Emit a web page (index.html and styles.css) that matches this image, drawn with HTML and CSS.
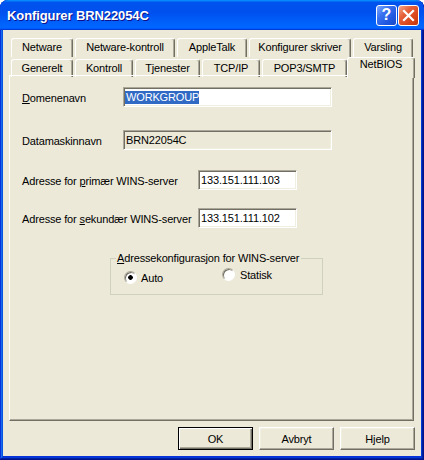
FILE: index.html
```html
<!DOCTYPE html>
<html lang="no">
<head>
<meta charset="utf-8">
<title>Konfigurer BRN22054C</title>
<link rel="stylesheet" href="styles.css">
</head>
<body>
<div class="window">
  <div class="titlebar">
    <span class="title">Konfigurer BRN22054C</span>
    <div class="controls">
      <span class="ctl help">?</span>
      <span class="ctl close">
        <svg width="13" height="13" viewBox="0 0 13 13"><path d="M2 2 L11 11 M11 2 L2 11" stroke="#fff" stroke-width="2.2" stroke-linecap="square" fill="none"/></svg>
      </span>
    </div>
  </div>
  <div class="client">
    <div class="tabs">
      <div class="tabrow back">
        <div class="tab">Netware</div>
        <div class="tab">Netware-kontroll</div>
        <div class="tab">AppleTalk</div>
        <div class="tab">Konfigurer skriver</div>
        <div class="tab">Varsling</div>
      </div>
      <div class="tabrow front">
        <div class="tab">Generelt</div>
        <div class="tab">Kontroll</div>
        <div class="tab">Tjenester</div>
        <div class="tab">TCP/IP</div>
        <div class="tab">POP3/SMTP</div>
        <div class="tab selected">NetBIOS</div>
      </div>
    </div>
    <div class="panel">
      <div class="frow">
        <span class="lbl narrow"><u>D</u>omenenavn</span>
        <span class="edit long rw"><span class="sel">WORKGROUP</span></span>
      </div>
      <div class="frow r2">
        <span class="lbl narrow">Datamaskinnavn</span>
        <span class="edit long ro">BRN22054C</span>
      </div>
      <div class="frow r3">
        <span class="lbl wide">Adresse for <u>p</u>rimær WINS-server</span>
        <span class="edit short rw">133.151.111.103</span>
      </div>
      <div class="frow r4">
        <span class="lbl wide">Adresse for <u>s</u>ekundær WINS-server</span>
        <span class="edit short rw">133.151.111.102</span>
      </div>
      <fieldset class="group">
        <legend><u>A</u>dressekonfigurasjon for WINS-server</legend>
        <div class="radios">
          <span class="opt auto"><span class="radio on"></span>Auto</span>
          <span class="opt stat"><span class="radio"></span>Statisk</span>
        </div>
      </fieldset>
    </div>
    <div class="buttons">
      <button class="btn default">OK</button>
      <button class="btn">Avbryt</button>
      <button class="btn">Hjelp</button>
    </div>
  </div>
</div>
</body>
</html>
```
FILE: styles.css
```css
* { box-sizing: border-box; }

body {
  margin: 0;
  background: #ffffff;
  font-family: "Liberation Sans", Arial, sans-serif;
  font-size: 11px;
  letter-spacing: -0.15px;
  color: #000;
}

.window {
  width: 424px;
  height: 460px;
  display: flex;
  flex-direction: column;
  background: #0831d9;
  border-radius: 8px 8px 0 0;
  padding: 0 3px 4px 3px;
  overflow: hidden;
  box-shadow:
    inset -1px -1px #00138c,
    inset 1px 0 #0831d9,
    inset -2px -2px #001ea0,
    inset 2px 0 #166aee,
    inset -3px -3px #003bda,
    inset 3px 0 #0855dd;
}

.titlebar {
  height: 30px;
  margin: 0 -3px;
  display: flex;
  align-items: center;
  padding: 0 5px 0 7px;
  border-radius: 8px 8px 0 0;
  background: linear-gradient(180deg, #0997ff, #0053ee 8%, #0050ee 40%, #0066ff 88%, #0066ff 93%, #005bff 95%, #003dd7 96%, #003dd7);
}

.title {
  flex: 1;
  color: #fff;
  font-weight: bold;
  font-size: 13px;
  text-shadow: 1px 1px #0f1089;
  letter-spacing: -0.1px;
}

.controls {
  display: flex;
  gap: 1px;
}

.ctl {
  width: 21px;
  height: 21px;
  border: 1px solid #fff;
  border-radius: 3px;
  display: flex;
  align-items: center;
  justify-content: center;
}

.help {
  background: linear-gradient(135deg, #7fa8ff 0%, #3a72f0 35%, #1f57e0 70%, #1a4cc8 100%);
  color: #fff;
  font-weight: bold;
  font-size: 16px;
  line-height: 1;
  letter-spacing: 0;
}

.close {
  background: linear-gradient(135deg, #f4a88a 0%, #e5603a 35%, #d9461c 70%, #c2360c 100%);
}

.client {
  flex: 1;
  background: #ece9d8;
  display: flex;
  flex-direction: column;
  padding: 8px 7px 6px 6px;
}

.tabs {
  padding: 0 1px 0 2px;
}

.tabrow {
  display: grid;
  column-gap: 2px;
}

.back {
  grid-template-columns: 62px 100px 70px 102px 60px;
  height: 19px;
}

.front {
  grid-template-columns: 62px 58px 65px 58px 85px 64px;
  height: 18px;
  align-items: end;
}

.tab {
  height: 100%;
  background: #ece9d8;
  border-top: 1px solid #fff;
  border-left: 1px solid #fff;
  border-right: 1px solid #716f64;
  box-shadow: inset -1px 0 #aca899;
  border-radius: 3px 3px 0 0;
  text-align: center;
  padding-top: 2px;
  line-height: 13px;
  white-space: nowrap;
}

.front .tab {
  height: 18px;
}

.front .tab.selected {
  position: relative;
  z-index: 2;
  height: 21px;
  margin: 0 -2px -1px -2px;
  padding-top: 0;
}

.panel {
  height: 346px;
  border: 1px solid;
  border-color: #fff #716f64 #716f64 #fff;
  box-shadow: inset -1px -1px #aca899;
  padding: 11px 12px 0 12px;
}

.frow {
  display: flex;
  align-items: center;
}

.r2 { margin-top: 23px; }
.r3 { margin-top: 20px; }
.r4 { margin-top: 18px; }

.lbl { padding-top: 1px; }
.lbl.narrow { width: 101px; }
.lbl.wide { width: 176px; }

.edit {
  height: 20px;
  display: flex;
  align-items: center;
  padding-left: 1px;
  border: 1px solid;
  border-color: #aca899 #fff #fff #aca899;
  box-shadow: inset 1px 1px #716f64, inset -1px -1px #f1efe2;
  white-space: nowrap;
}

.edit.long { width: 209px; }
.edit.short { width: 99px; padding-left: 2px; }
.edit.rw { background: #fff; }
.edit.ro { background: #ece9d8; padding-left: 2px; }

.sel {
  background: #316ac5;
  color: #fff;
  line-height: 13px;
  padding: 0 0 0 1px;
}

.group {
  margin: 24px 0 0 88px;
  width: 213px;
  height: 43px;
  padding: 0;
  border: 1px solid #d0d0bf;
  border-radius: 0;
}

.group legend {
  margin-left: 5px;
  padding: 0 2px 0 1px;
  line-height: 13px;
}

.radios {
  display: flex;
  align-items: flex-start;
  padding-left: 13px;
}

.opt {
  display: flex;
  align-items: center;
  gap: 4px;
}

.opt.auto {
  width: 98px;
  margin-top: 6px;
}

.opt.stat {
  margin-top: 3px;
  gap: 5px;
}

.radio {
  width: 13px;
  height: 13px;
  border-radius: 50%;
  border: 1px solid;
  border-color: #aca899 #fff #fff #aca899;
  background: #fff;
  box-shadow: inset 1px 1px #716f64;
}

.radio.on {
  background: radial-gradient(circle at 50% 50%, #000 0 2px, #fff 2.6px);
}

.buttons {
  display: flex;
  justify-content: flex-end;
  gap: 6px;
  margin-top: 6px;
  margin-right: -1px;
}

.btn {
  width: 75px;
  height: 23px;
  padding: 0;
  font: inherit;
  letter-spacing: inherit;
  color: #000;
  background: #ece9d8;
  border: 1px solid;
  border-color: #fff #716f64 #716f64 #fff;
  box-shadow: inset -1px -1px #aca899, inset 1px 1px #f1efe2;
  border-radius: 0;
}

.btn.default {
  border-color: #000;
  box-shadow: inset 1px 1px #fff, inset -1px -1px #716f64, inset -2px -2px #aca899;
}
```
